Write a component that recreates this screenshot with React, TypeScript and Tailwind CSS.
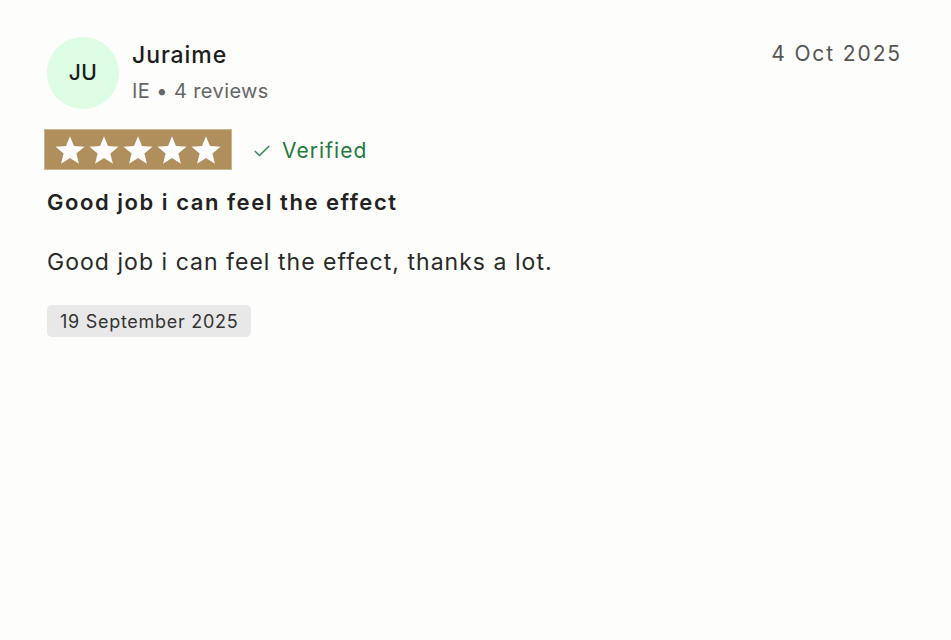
import React from 'react'

const Star = () => (
    <svg viewBox="0 0 24 24" className="h-[32px] w-[32px]" fill="#ffffff">
        <path d="M12 1.6l2.95 7.35 7.9.55-6.07 5.07 1.93 7.68L12 18.05 5.29 22.25l1.93-7.68L1.15 9.5l7.9-.55z" />
    </svg>
)

const App = () => {
    return (
        <div
            className="min-h-[640px] w-full bg-[#fdfdfb] text-[#1c1c1c]"
            style={{ fontFamily: 'Inter, "Noto Sans", sans-serif' }}
        >
            <div className="px-[47px] pt-[37px]">
                <div className="flex items-start justify-between">
                    <div className="flex items-start gap-[13px]">
                        <div className="flex h-[72px] w-[72px] items-center justify-center rounded-full bg-[#dcfce3] text-[21px] font-medium tracking-[0.02em] text-[#1a1a1a]">
                            JU
                        </div>
                        <div className="flex flex-col">
                            <span className="mt-[2px] text-[23px] font-medium leading-[32px] tracking-[0.04em]">Juraime</span>
                            <span className="mt-[6px] text-[20px] leading-[28px] tracking-[0.02em] text-[#666666]">IE • 4 reviews</span>
                        </div>
                    </div>
                    <span className="mr-[2px] mt-[2px] text-[21px] leading-[30px] tracking-[0.09em] text-[#555555]">4 Oct 2025</span>
                </div>

                <div className="mt-[20px] flex items-center gap-[20px]">
                    <div className="-ml-[3px] flex h-[41px] w-[188px] items-center justify-center gap-[2px] border border-[#cbb58f] bg-[#b08f5d]">
                        <Star />
                        <Star />
                        <Star />
                        <Star />
                        <Star />
                    </div>
                    <div className="mt-[2px] flex items-center gap-[10px] text-[#1e7a3c]">
                        <svg viewBox="0 0 24 24" className="h-[20px] w-[20px]" fill="none" stroke="#2e8b4a" strokeWidth="1.8" strokeLinecap="round" strokeLinejoin="round">
                            <path d="M4 12.5l5 5L20 6.5" />
                        </svg>
                        <span className="text-[21px] leading-[28px] tracking-[0.05em]">Verified</span>
                    </div>
                </div>

                <h2 className="mt-[17px] text-[22px] font-semibold leading-[30px] tracking-[0.07em] text-[#222222]">
                    Good job i can feel the effect
                </h2>

                <p className="mt-[29px] text-[23px] leading-[32px] tracking-[0.045em] text-[#2a2a2a]">
                    Good job i can feel the effect, thanks a lot.
                </p>

                <div className="mt-[27px] inline-flex h-[32px] items-center rounded-[5px] bg-[#e8e8e8] px-[13px] text-[18px] tracking-[0.04em] text-[#333333]">
                    19 September 2025
                </div>
            </div>
        </div>
    )
}

export default App
